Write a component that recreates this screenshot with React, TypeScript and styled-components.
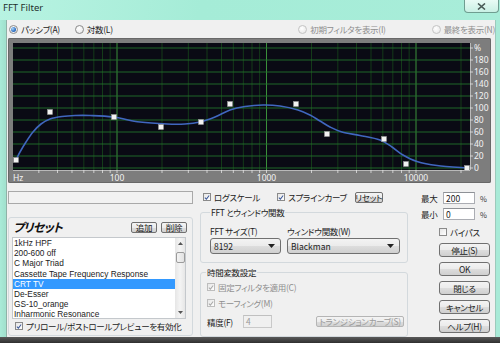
import React from "react";
import styled, { createGlobalStyle } from "styled-components";

const GlobalStyle = createGlobalStyle`
  html, body { margin: 0; padding: 0; background: #3a3a3a; }
  body {
    font-family: "Noto Sans CJK JP", "Noto Sans", sans-serif;
    font-feature-settings: "palt";
    font-size: 8.5px;
    letter-spacing: -0.3px;
    color: #1b1b1b;
  }
  * { box-sizing: border-box; }
`;

const Window = styled.div`
  width: 500px;
  height: 343px;
  display: flex;
  flex-direction: column;
  overflow: hidden;
  background: #3a3a3a;
`;

const TitleBar = styled.div`
  height: 20px;
  flex: none;
  display: flex;
  justify-content: space-between;
  align-items: flex-start;
  padding-left: 3px;
  background: linear-gradient(100deg, #b8f3e2 0%, #a5ecd7 40%, #a8edd9 100%);
`;

const Title = styled.div`
  font-family: "Noto Sans", "Liberation Sans", sans-serif;
  font-size: 9.5px;
  letter-spacing: 0;
  line-height: 15px;
  color: #1f2f2a;
`;

const CloseButton = styled.div`
  width: 35px;
  height: 13px;
  margin-right: 1px;
  border: 1px solid #6f9d90;
  border-top: none;
  border-radius: 0 0 4px 4px;
  background: linear-gradient(180deg, #e9fbf5 0%, #c9f0e4 100%);
  display: flex;
  align-items: center;
  justify-content: center;
`;

const Middle = styled.div`
  display: flex;
  height: 317px;
  flex: none;
`;

const LeftFrame = styled.div`
  width: 7px;
  background: linear-gradient(90deg, #a9ebd8 0%, #a2e2cf 80%);
  border-right: 1px solid #8fb2a7;
`;

const RightFrame = styled.div`
  width: 5px;
  background: #a8ead7;
  border-left: 1px solid #9cc9bb;
`;

const BottomBar = styled.div`
  flex: 1;
  background: linear-gradient(180deg, #5a5a5a 0%, #2f2f2f 100%);
`;

const Client = styled.div`
  width: 488px;
  height: 317px;
  background: #f0f0f0;
  display: flex;
  flex-direction: column;
`;

const TopRow = styled.div`
  height: 18px;
  display: flex;
  align-items: center;
  padding-left: 2px;
`;

const RadioItem = styled.label<{ $gapRight?: number; $disabled?: boolean }>`
  display: inline-flex;
  align-items: center;
  gap: 3px;
  margin-right: ${(p) => p.$gapRight ?? 0}px;
  color: ${(p) => (p.$disabled ? "#8e8e8e" : "#1b1b1b")};
  line-height: 12px;
  white-space: nowrap;
`;

const RadioCircle = styled.span<{ $checked?: boolean; $disabled?: boolean }>`
  width: 9px;
  height: 9px;
  border-radius: 50%;
  border: 1px solid ${(p) => (p.$disabled ? "#c4c4c4" : "#8b8b8b")};
  background: radial-gradient(circle at 40% 35%, #ffffff 0%, #e4e4e4 100%);
  display: inline-flex;
  align-items: center;
  justify-content: center;
  &::after {
    content: "";
    display: ${(p) => (p.$checked ? "block" : "none")};
    width: 5px;
    height: 5px;
    border-radius: 50%;
    background: radial-gradient(circle at 35% 35%, #a9d4f7 0%, #2f71c4 60%, #1d4f96 100%);
  }
`;

const Spacer = styled.div`
  flex: 1;
`;

const GraphPanel = styled.div`
  margin-left: 1px;
  width: 483px;
  height: 145px;
  background: #7d7d7d;
  border-radius: 2px;
  box-shadow: inset 0 0 0 1px #686868;
  flex: none;
`;

const Lower = styled.div`
  display: flex;
  height: 154px;
`;

const LeftCol = styled.div`
  margin-left: 1px;
  width: 185px;
  padding-top: 8px;
  display: flex;
  flex-direction: column;
`;

const StatusBox = styled.div`
  height: 13px;
  border: 1px solid #a9a9a9;
  background: #f2f2f2;
`;

const GroupBox = styled.div<{ $top: number; $height: number }>`
  margin-top: ${(p) => p.$top}px;
  height: ${(p) => p.$height}px;
  border: 1px solid #d3d9dd;
  border-radius: 3px;
  display: flex;
  flex-direction: column;
`;

const GroupLegend = styled.span<{ $left: number }>`
  display: block;
  width: fit-content;
  margin: -7px 0 0 ${(p) => p.$left}px;
  padding: 0 1px;
  line-height: 12px;
  background: #f0f0f0;
  white-space: nowrap;
`;

const PresetHeader = styled.div`
  margin-top: 3px;
  height: 12px;
  display: flex;
  align-items: center;
  padding-left: 4px;
  padding-right: 5px;
`;

const PresetTitle = styled.span`
  font-size: 12px;
  font-weight: 700;
  font-style: italic;
  line-height: 12px;
  flex: 1;
  letter-spacing: -0.8px;
  color: #111;
`;

const SmallButton = styled.button<{ $w: number; $disabled?: boolean }>`
  width: ${(p) => p.$w}px;
  height: 11px;
  padding: 0;
  margin-left: 4px;
  font: inherit;
  font-size: 8.5px;
  letter-spacing: -0.3px;
  line-height: 9px;
  color: ${(p) => (p.$disabled ? "#9a9a9a" : "#1b1b1b")};
  border: 1px solid ${(p) => (p.$disabled ? "#b5b5b5" : "#707070")};
  border-radius: 2px;
  background: linear-gradient(180deg, #f4f4f4 0%, #ececec 50%, #dedede 51%, #d2d2d2 100%);
  display: inline-flex;
  align-items: center;
  justify-content: center;
  white-space: nowrap;
`;

const ListBox = styled.div`
  margin-top: 4px;
  margin-left: 3px;
  width: 174px;
  height: 82px;
  border: 1px solid #c4c8cc;
  background: #ffffff;
  display: flex;
`;

const ListItems = styled.div`
  flex: 1;
  display: flex;
  flex-direction: column;
  overflow: hidden;
`;

const ListRow = styled.div<{ $selected?: boolean }>`
  height: 10.2px;
  flex: none;
  line-height: 10.2px;
  padding-left: 1px;
  white-space: nowrap;
  font-family: "Liberation Sans", Arial, sans-serif;
  font-size: 8.3px;
  letter-spacing: 0;
  background: ${(p) => (p.$selected ? "#3399ff" : "transparent")};
  color: ${(p) => (p.$selected ? "#ffffff" : "#1b1b1b")};
`;

const ScrollBar = styled.div`
  width: 10px;
  display: flex;
  flex-direction: column;
  align-items: center;
  background: linear-gradient(90deg, #e6e6e6 0%, #f4f4f4 50%, #e6e6e6 100%);
`;

const ScrollArrow = styled.div`
  height: 11px;
  width: 10px;
  display: flex;
  align-items: center;
  justify-content: center;
`;

const ScrollThumb = styled.div`
  margin-top: 3px;
  width: 9px;
  height: 11px;
  border: 1px solid #9b9b9b;
  border-radius: 2px;
  background: linear-gradient(90deg, #f3f3f3 0%, #e2e2e2 100%);
`;

const CheckRow = styled.div<{ $mt?: number; $pl?: number; $h?: number }>`
  margin-top: ${(p) => p.$mt ?? 0}px;
  padding-left: ${(p) => p.$pl ?? 0}px;
  height: ${(p) => p.$h ?? 12}px;
  display: flex;
  align-items: center;
  white-space: nowrap;
`;

const CheckItem = styled.label<{ $disabled?: boolean; $mr?: number }>`
  display: inline-flex;
  align-items: center;
  gap: 3px;
  margin-right: ${(p) => p.$mr ?? 0}px;
  color: ${(p) => (p.$disabled ? "#8e8e8e" : "#1b1b1b")};
  line-height: 12px;
  white-space: nowrap;
`;

const CheckSquare = styled.span<{ $disabled?: boolean }>`
  width: 8px;
  height: 8px;
  flex: none;
  border: 1px solid ${(p) => (p.$disabled ? "#bdbdbd" : "#8a8a8a")};
  background: linear-gradient(135deg, #e6e6e6 0%, #ffffff 100%);
  display: inline-flex;
  align-items: center;
  justify-content: center;
`;

const MidCol = styled.div`
  margin-left: 7px;
  width: 208px;
  display: flex;
  flex-direction: column;
`;

const MidTop = styled.div`
  height: 21px;
  padding-top: 7px;
  padding-left: 3px;
  display: flex;
  align-items: center;
`;

const FieldGrid = styled.div`
  display: grid;
  grid-template-columns: 71px 113px;
  column-gap: 6px;
  padding-left: 9px;
`;

const FieldLabel = styled.div`
  margin-top: 7px;
  height: 12px;
  line-height: 12px;
  white-space: nowrap;
`;

const Dropdown = styled.div`
  margin-top: 1px;
  height: 16px;
  border: 1px solid #707070;
  border-radius: 3px;
  background: linear-gradient(180deg, #f3f3f3 0%, #ebebeb 50%, #dddddd 51%, #d0d0d0 100%);
  display: flex;
  align-items: center;
  justify-content: space-between;
  padding: 0 5px 0 3px;
  letter-spacing: 0;
`;

const PrecisionRow = styled.div`
  margin-top: 6px;
  height: 13px;
  display: flex;
  align-items: center;
  padding-left: 6px;
  padding-right: 3px;
`;

const PrecisionLabel = styled.span`
  width: 36px;
  line-height: 12px;
`;

const TextInput = styled.div<{ $w: number; $disabled?: boolean }>`
  width: ${(p) => p.$w}px;
  height: ${(p) => (p.$disabled ? 13 : 12)}px;
  border: 1px solid ${(p) => (p.$disabled ? "#c9c9c9" : "#abadb3")};
  border-top-color: ${(p) => (p.$disabled ? "#c0c0c0" : "#8e9196")};
  background: ${(p) => (p.$disabled ? "#f0f0f0" : "#ffffff")};
  color: ${(p) => (p.$disabled ? "#9a9a9a" : "#1b1b1b")};
  padding-left: 2px;
  line-height: 11px;
  font-size: 8.5px;
  letter-spacing: 0;
`;

const RightCol = styled.div`
  margin-left: 7px;
  width: 80px;
  padding-top: 9px;
  display: flex;
  flex-direction: column;
`;

const RangeRow = styled.div<{ $mt?: number }>`
  margin-top: ${(p) => p.$mt ?? 0}px;
  height: 12px;
  display: flex;
  align-items: center;
  padding-left: 6px;
`;

const RangeLabel = styled.span`
  width: 22px;
  line-height: 12px;
`;

const Unit = styled.span`
  margin-left: 5px;
  font-size: 7.5px;
  color: #333;
`;

const ButtonStack = styled.div`
  margin-top: 5px;
  margin-left: 24px;
  width: 51px;
  display: flex;
  flex-direction: column;
  gap: 5px;
`;

const DialogButton = styled.button`
  height: 14px;
  padding: 0;
  font: inherit;
  font-size: 8.5px;
  letter-spacing: -0.3px;
  line-height: 12px;
  color: #1b1b1b;
  border: 1px solid #707070;
  border-radius: 3px;
  background: linear-gradient(180deg, #f3f3f3 0%, #ebebeb 50%, #dddddd 51%, #cfcfcf 100%);
  white-space: nowrap;
`;

/* ---------- Graph ---------- */
const OX = 8;
const OY = 38;
const fx = (f: number) => 117 + (Math.log10(f) - 2) * 149.5 - OX;
const vy = (v: number) => 130 - v * 0.6;

const minorFreqs: number[] = [];
[10, 100, 1000, 10000].forEach((d) => {
  for (let k = 1; k <= 9; k++) {
    const f = d * k;
    if (f > 20 && f < 23000) minorFreqs.push(f);
  }
});

const curveRaw: [number, number][] = [
  [16, 160], [20, 152], [26, 142], [33, 132], [41, 124], [50, 119], [62, 116.5],
  [75, 115.5], [90, 115.5], [113, 117], [140, 122], [167, 124], [185, 124],
  [200, 122], [215, 117], [230, 110], [245, 106.5], [263, 105], [280, 106],
  [298, 110], [310, 115], [320, 121], [330, 127], [342, 132], [360, 135.5],
  [380, 140], [392, 147], [403, 155], [417, 161.5], [437, 165.5], [467, 168],
];
const curvePts = curveRaw.map(([x, y]) => [x - OX, y - OY] as [number, number]);

function smoothPath(pts: [number, number][]) {
  let d = `M${pts[0][0]},${pts[0][1]}`;
  for (let i = 0; i < pts.length - 1; i++) {
    const p0 = pts[i - 1] || pts[i];
    const p1 = pts[i];
    const p2 = pts[i + 1];
    const p3 = pts[i + 2] || p2;
    const c1x = p1[0] + (p2[0] - p0[0]) / 6;
    const c1y = p1[1] + (p2[1] - p0[1]) / 6;
    const c2x = p2[0] - (p3[0] - p1[0]) / 6;
    const c2y = p2[1] - (p3[1] - p1[1]) / 6;
    d += ` C${c1x.toFixed(2)},${c1y.toFixed(2)} ${c2x.toFixed(2)},${c2y.toFixed(2)} ${p2[0]},${p2[1]}`;
  }
  return d;
}

const nodes: [number, number][] = [
  [16, 160], [50, 112], [114, 117], [161, 127], [201, 122], [230, 104],
  [296, 104], [327, 134], [384, 139], [406, 164], [467, 168],
];

const yLabels = [180, 160, 140, 120, 100, 80, 60, 40, 20, 0];

function Graph() {
  const left = 5;
  const right = 462;
  const top = 5;
  const bottom = 132;
  return (
    <svg width={483} height={145} viewBox="0 0 483 145">
      <rect x={left} y={top} width={right - left} height={bottom - top} fill="#0a0a14" />
      {minorFreqs.map((f) => {
        const x = fx(f);
        const major = f === 100 || f === 1000 || f === 10000;
        return (
          <line
            key={`v${f}`}
            x1={x}
            x2={x}
            y1={top}
            y2={bottom}
            stroke={major ? "#3a8f3a" : "#17461a"}
            strokeWidth={major ? 1 : 0.8}
          />
        );
      })}
      {Array.from({ length: 11 }, (_, i) => i * 20).map((v) => (
        <line key={`h${v}`} x1={left} x2={right} y1={vy(v)} y2={vy(v)} stroke="#23732a" strokeWidth={0.9} />
      ))}
      <line x1={left} x2={right} y1={bottom + 0.5} y2={bottom + 0.5} stroke="#b9b9b9" strokeWidth={1} />
      {minorFreqs.map((f) => (
        <line key={`t${f}`} x1={fx(f)} x2={fx(f)} y1={bottom} y2={bottom + 3} stroke="#e4e4e4" strokeWidth={0.8} />
      ))}
      <line x1={right + 0.5} x2={right + 0.5} y1={top} y2={bottom} stroke="#b9b9b9" strokeWidth={1} />
      {Array.from({ length: 11 }, (_, i) => i * 20).map((v) => (
        <line key={`rt${v}`} x1={right} x2={right + 3} y1={vy(v)} y2={vy(v)} stroke="#e4e4e4" strokeWidth={0.8} />
      ))}
      <path d={smoothPath(curvePts)} fill="none" stroke="#4067bf" strokeWidth={1.6} />
      {nodes.map(([x, y], i) => (
        <rect
          key={`n${i}`}
          x={x - OX - 2.5}
          y={y - OY - 2.5}
          width={5}
          height={5}
          fill="#f2f2f2"
          stroke="#9a9a9a"
          strokeWidth={0.5}
        />
      ))}
      <g fontFamily="'Noto Sans', 'DejaVu Sans', sans-serif" fontSize={8.5} fill="#f4f4f4" letterSpacing={0}>
        <text x={right + 4} y={vy(200) + 3}>%</text>
        {yLabels.map((v) => (
          <text key={`yl${v}`} x={right + 4} y={vy(v) + 3}>
            {v}
          </text>
        ))}
        <text x={5} y={143}>Hz</text>
        <text x={fx(100)} y={143} textAnchor="middle">100</text>
        <text x={fx(1000)} y={143} textAnchor="middle">1000</text>
        <text x={fx(10000)} y={143} textAnchor="middle">10000</text>
      </g>
    </svg>
  );
}

function Check({ disabled }: { disabled?: boolean }) {
  return (
    <CheckSquare $disabled={disabled}>
      <svg width="7" height="7" viewBox="0 0 7 7">
        <path d="M1 3.6 L2.8 5.4 L6 1.2" fill="none" stroke={disabled ? "#a9a9a9" : "#3d5a9a"} strokeWidth="1.2" />
      </svg>
    </CheckSquare>
  );
}

function EmptyCheck() {
  return <CheckSquare />;
}

function DownArrow() {
  return (
    <svg width="7" height="4" viewBox="0 0 7 4">
      <path d="M0 0 L7 0 L3.5 4 Z" fill="#222" />
    </svg>
  );
}

const presets = [
  "1kHz HPF",
  "200-600 off",
  "C Major Triad",
  "Cassette Tape Frequency Response",
  "CRT TV",
  "De-Esser",
  "GS-10_orange",
  "Inharmonic Resonance",
];

export default function App() {
  return (
    <>
      <GlobalStyle />
      <Window>
        <TitleBar>
          <Title>FFT Filter</Title>
          <CloseButton>
            <svg width="9" height="7" viewBox="0 0 9 7">
              <path d="M1 0.5 L8 6.5 M8 0.5 L1 6.5" stroke="#4a5a56" strokeWidth="1.6" />
            </svg>
          </CloseButton>
        </TitleBar>
        <Middle>
          <LeftFrame />
          <Client>
            <TopRow>
              <RadioItem $gapRight={15}>
                <RadioCircle $checked />
                パッシブ(A)
              </RadioItem>
              <RadioItem>
                <RadioCircle />
                対数(L)
              </RadioItem>
              <Spacer />
              <RadioItem $gapRight={46} $disabled>
                <RadioCircle $disabled />
                初期フィルタを表示(I)
              </RadioItem>
              <RadioItem $disabled>
                <RadioCircle $disabled />
                最終を表示(N)
              </RadioItem>
            </TopRow>
            <GraphPanel>
              <Graph />
            </GraphPanel>
            <Lower>
              <LeftCol>
                <StatusBox />
                <GroupBox $top={13} $height={119}>
                  <PresetHeader>
                    <PresetTitle>プリセット</PresetTitle>
                    <SmallButton $w={26}>追加</SmallButton>
                    <SmallButton $w={26}>削除</SmallButton>
                  </PresetHeader>
                  <ListBox>
                    <ListItems>
                      {presets.map((p) => (
                        <ListRow key={p} $selected={p === "CRT TV"}>
                          {p}
                        </ListRow>
                      ))}
                    </ListItems>
                    <ScrollBar>
                      <ScrollArrow>
                        <svg width="5" height="3" viewBox="0 0 5 3">
                          <path d="M0 3 L5 3 L2.5 0 Z" fill="#555" />
                        </svg>
                      </ScrollArrow>
                      <ScrollThumb />
                      <Spacer />
                      <ScrollArrow>
                        <svg width="5" height="3" viewBox="0 0 5 3">
                          <path d="M0 0 L5 0 L2.5 3 Z" fill="#555" />
                        </svg>
                      </ScrollArrow>
                    </ScrollBar>
                  </ListBox>
                  <CheckRow $mt={1} $pl={6}>
                    <CheckItem>
                      <Check />
                      プリロール/ポストロールプレビューを有効化
                    </CheckItem>
                  </CheckRow>
                </GroupBox>
              </LeftCol>
              <MidCol>
                <MidTop>
                  <CheckItem $mr={17}>
                    <Check />
                    ログスケール
                  </CheckItem>
                  <CheckItem $mr={4}>
                    <Check />
                    スプラインカーブ
                  </CheckItem>
                  <SmallButton $w={28}>リセット</SmallButton>
                </MidTop>
                <GroupBox $top={8} $height={51}>
                  <GroupLegend $left={9}>FFT とウィンドウ関数</GroupLegend>
                  <FieldGrid>
                    <FieldLabel>FFT サイズ(T)</FieldLabel>
                    <FieldLabel>ウィンドウ関数(W)</FieldLabel>
                    <Dropdown>
                      <span>8192</span>
                      <DownArrow />
                    </Dropdown>
                    <Dropdown>
                      <span>Blackman</span>
                      <DownArrow />
                    </Dropdown>
                  </FieldGrid>
                </GroupBox>
                <GroupBox $top={9} $height={65}>
                  <GroupLegend $left={5}>時間変数設定</GroupLegend>
                  <CheckRow $mt={3} $pl={6}>
                    <CheckItem $disabled>
                      <Check disabled />
                      固定フィルタを適用(C)
                    </CheckItem>
                  </CheckRow>
                  <CheckRow $mt={4} $pl={6}>
                    <CheckItem $disabled>
                      <Check disabled />
                      モーフィング(M)
                    </CheckItem>
                  </CheckRow>
                  <PrecisionRow>
                    <PrecisionLabel>精度(F)</PrecisionLabel>
                    <TextInput $w={29} $disabled>
                      4
                    </TextInput>
                    <Spacer />
                    <SmallButton $w={88} $disabled>
                      トランジションカーブ(S)
                    </SmallButton>
                  </PrecisionRow>
                </GroupBox>
              </MidCol>
              <RightCol>
                <RangeRow>
                  <RangeLabel>最大</RangeLabel>
                  <TextInput $w={32}>200</TextInput>
                  <Unit>%</Unit>
                </RangeRow>
                <RangeRow $mt={4}>
                  <RangeLabel>最小</RangeLabel>
                  <TextInput $w={32}>0</TextInput>
                  <Unit>%</Unit>
                </RangeRow>
                <CheckRow $mt={6} $pl={24}>
                  <CheckItem>
                    <EmptyCheck />
                    バイパス
                  </CheckItem>
                </CheckRow>
                <ButtonStack>
                  <DialogButton>停止(S)</DialogButton>
                  <DialogButton>OK</DialogButton>
                  <DialogButton>閉じる</DialogButton>
                  <DialogButton>キャンセル</DialogButton>
                  <DialogButton>ヘルプ(H)</DialogButton>
                </ButtonStack>
              </RightCol>
            </Lower>
          </Client>
          <RightFrame />
        </Middle>
        <BottomBar />
      </Window>
    </>
  );
}
